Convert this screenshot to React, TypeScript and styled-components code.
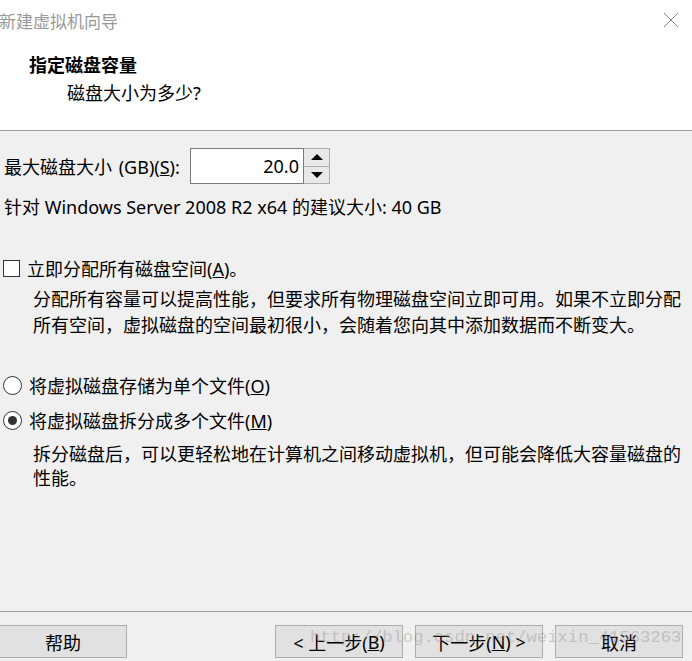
import React from "react";
import styled, { createGlobalStyle } from "styled-components";

const GlobalStyle = createGlobalStyle`
  html, body {
    margin: 0;
    padding: 0;
    background: #f0f0f0;
  }
  body {
    font-family: "Noto Sans", "Noto Sans CJK SC", sans-serif;
    font-size: 18px;
    color: #000;
  }
`;

const Window = styled.div`
  position: relative;
  width: 692px;
  height: 661px;
  display: flex;
  flex-direction: column;
  background: #f0f0f0;
  overflow: hidden;
`;

const Header = styled.div`
  height: 130px;
  background: #fff;
  border-bottom: 1px solid #a0a0a0;
`;

const TitleBar = styled.div`
  height: 40px;
  display: flex;
  align-items: center;
  justify-content: space-between;
  padding-right: 13px;
`;

const Title = styled.span`
  font-size: 17px;
  color: #999;
  margin-left: -1px;
`;

const CloseIcon = () => (
  <svg width="16" height="16" viewBox="0 0 16 16">
    <path d="M1 1 L15 15 M15 1 L1 15" stroke="#8a8a8a" strokeWidth="1" fill="none" />
  </svg>
);

const Heading = styled.div`
  margin: 13px 0 0 29px;
  line-height: 24px;
  font-weight: bold;
`;

const SubHeading = styled.div`
  margin: 4px 0 0 67px;
  line-height: 24px;
`;

const Body = styled.div`
  flex: 1;
  padding-left: 4px;
`;

const SizeRow = styled.div`
  margin-top: 17px;
  display: flex;
  align-items: center;
  height: 36px;
`;

const SizeLabel = styled.span`
  width: 186px;
  word-spacing: 2px;
`;

const U = styled.span`
  text-decoration: underline;
`;

const SpinBox = styled.div`
  display: flex;
  height: 36px;
`;

const SpinInput = styled.div`
  width: 108px;
  border: 1px solid #7a7a7a;
  background: #fff;
  display: flex;
  align-items: center;
  justify-content: flex-end;
  padding-right: 4px;
`;

const SpinButtons = styled.div`
  width: 25px;
  display: flex;
  flex-direction: column;
  border: 1px solid #adadad;
  border-left: none;
`;

const SpinButton = styled.div<{ down?: boolean }>`
  flex: 1;
  background: #e8e8e8;
  display: flex;
  align-items: center;
  justify-content: center;
  border-top: ${({ down }) => (down ? "1px solid #adadad" : "none")};

  &::after {
    content: "";
    width: 0;
    height: 0;
    border-left: 6px solid transparent;
    border-right: 6px solid transparent;
    ${({ down }) =>
      down ? "border-top: 6px solid #000;" : "border-bottom: 6px solid #000;"}
  }
`;

const Line = styled.div<{ mt: number }>`
  margin-top: ${({ mt }) => mt}px;
  line-height: 24px;
`;

const OptionRow = styled.label<{ mt: number }>`
  margin-top: ${({ mt }) => mt}px;
  display: flex;
  align-items: center;
  height: 24px;
  gap: 7px;
`;

const CheckBox = styled.span`
  width: 17px;
  height: 17px;
  box-sizing: border-box;
  border: 1px solid #333;
  background: #fff;
  margin-left: -1px;
`;

const Radio = styled.span<{ checked?: boolean }>`
  width: 19px;
  height: 19px;
  box-sizing: border-box;
  border: 1px solid #333;
  border-radius: 50%;
  background: #fff;
  display: flex;
  align-items: center;
  justify-content: center;
  margin-left: -1px;

  &::after {
    content: "";
    width: 9px;
    height: 9px;
    border-radius: 50%;
    background: ${({ checked }) => (checked ? "#333" : "transparent")};
  }
`;

const Desc = styled.div<{ mt: number; lh: number }>`
  margin: ${({ mt }) => mt}px 0 0 29px;
  line-height: ${({ lh }) => lh}px;
  width: 656px;
`;

const Footer = styled.div`
  height: 50px;
  border-top: 1px solid #a0a0a0;
  display: flex;
  align-items: flex-start;
  padding: 13px 9px 0 0;
  box-sizing: border-box;
`;

const Button = styled.div<{ push?: boolean }>`
  width: 128px;
  height: 33px;
  box-sizing: border-box;
  border: 1px solid #adadad;
  background: #e1e1e1;
  display: flex;
  align-items: center;
  justify-content: center;
  margin-left: ${({ push }) => (push ? "auto" : "12px")};
  white-space: pre;
`;

const HelpButton = styled(Button)`
  margin-left: -1px;
`;

const Watermark = styled.div`
  position: absolute;
  left: 310px;
  top: 628px;
  font-family: "Liberation Mono", monospace;
  font-size: 17.2px;
  color: rgba(140, 140, 140, 0.4);
  pointer-events: none;
  white-space: nowrap;
`;

export default function App() {
  return (
    <>
      <GlobalStyle />
      <Window>
        <Header>
          <TitleBar>
            <Title>新建虚拟机向导</Title>
            <CloseIcon />
          </TitleBar>
          <Heading>指定磁盘容量</Heading>
          <SubHeading>磁盘大小为多少?</SubHeading>
        </Header>
        <Body>
          <SizeRow>
            <SizeLabel>
              最大磁盘大小 (GB)(<U>S</U>):
            </SizeLabel>
            <SpinBox>
              <SpinInput>20.0</SpinInput>
              <SpinButtons>
                <SpinButton />
                <SpinButton down />
              </SpinButtons>
            </SpinBox>
          </SizeRow>
          <Line mt={11}>针对 Windows Server 2008 R2 x64 的建议大小: 40 GB</Line>
          <OptionRow mt={37}>
            <CheckBox />
            <span>
              立即分配所有磁盘空间(<U>A</U>)。
            </span>
          </OptionRow>
          <Desc mt={6} lh={26}>
            分配所有容量可以提高性能，但要求所有物理磁盘空间立即可用。如果不立即分配所有空间，虚拟磁盘的空间最初很小，会随着您向其中添加数据而不断变大。
          </Desc>
          <OptionRow mt={35}>
            <Radio />
            <span>
              将虚拟磁盘存储为单个文件(<U>O</U>)
            </span>
          </OptionRow>
          <OptionRow mt={11}>
            <Radio checked />
            <span>
              将虚拟磁盘拆分成多个文件(<U>M</U>)
            </span>
          </OptionRow>
          <Desc mt={10} lh={24}>
            拆分磁盘后，可以更轻松地在计算机之间移动虚拟机，但可能会降低大容量磁盘的性能。
          </Desc>
        </Body>
        <Footer>
          <HelpButton>帮助</HelpButton>
          <Button push>
            {"< 上一步("}
            <U>B</U>
            {")"}
          </Button>
          <Button>
            {"下一步("}
            <U>N</U>
            {") >"}
          </Button>
          <Button>取消</Button>
        </Footer>
        <Watermark>http://blog.csdn.net/weixin_41563263</Watermark>
      </Window>
    </>
  );
}
